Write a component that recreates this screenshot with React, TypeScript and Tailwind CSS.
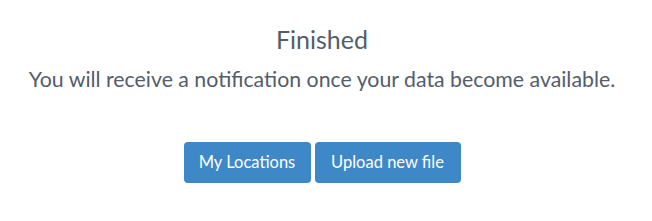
import React from 'react';

const App: React.FC = () => {
  return (
    <div className="w-[652px] h-[221px] pr-[8px] bg-white flex flex-col items-center text-[#535d6b] font-['Lato',sans-serif]">
      <h2 className="mt-[24px] text-[25px] leading-[30px]">Finished</h2>
      <p className="mt-[12px] text-[21.3px] leading-[26px]">
        You will receive a notification once your data become available.
      </p>
      <div className="mt-[50px] flex gap-[4px]">
        <button className="h-[41px] w-[127px] rounded-[4px] bg-[#3e88c8] text-white text-[16.5px]">
          My Locations
        </button>
        <button className="h-[41px] w-[146px] rounded-[4px] bg-[#3e88c8] text-white text-[16.5px]">
          Upload new file
        </button>
      </div>
    </div>
  );
};

export default App;
